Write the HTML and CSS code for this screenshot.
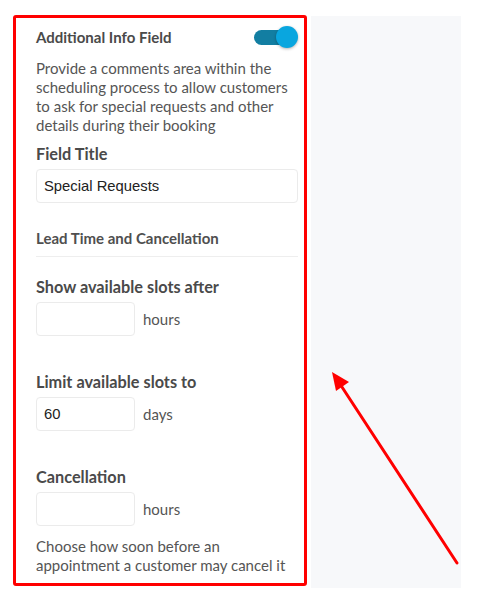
FILE: index.html
```html
<!DOCTYPE html>
<html>
<head>
<meta charset="utf-8">
<link rel="stylesheet" href="styles.css">
</head>
<body>
<div class="stage">
  <div class="panel">
    <div class="header-row">
      <span class="header-title">Additional Info Field</span>
      <span class="toggle"><span class="toggle-track"></span><span class="toggle-knob"></span></span>
    </div>
    <p class="desc">Provide a comments area within the scheduling process to allow customers to ask for special requests and other details during their booking</p>
    <div class="label label-first">Field Title</div>
    <div class="input input-wide">Special Requests</div>
    <div class="section-title">Lead Time and Cancellation</div>
    <div class="label label-s1">Show available slots after</div>
    <div class="field-row"><div class="input input-small"></div><span class="unit">hours</span></div>
    <div class="label label-gap">Limit available slots to</div>
    <div class="field-row"><div class="input input-small">60</div><span class="unit">days</span></div>
    <div class="label label-gap">Cancellation</div>
    <div class="field-row"><div class="input input-small"></div><span class="unit">hours</span></div>
    <p class="desc desc-bottom">Choose how soon before an appointment a customer may cancel it</p>
  </div>
  <div class="preview"></div>
</div>
<svg class="arrow" width="484" height="608" viewBox="0 0 484 608">
  <line x1="457" y1="563" x2="340" y2="384" stroke="#ff0000" stroke-width="3" stroke-linecap="round"/>
  <polygon points="332,372 349,382 336,391" fill="#ff0000"/>
</svg>
</body>
</html>
```
FILE: styles.css
```css
html, body {
  margin: 0;
  padding: 0;
  background: #ffffff;
}
body {
  width: 484px;
  height: 608px;
  overflow: hidden;
  position: relative;
  font-family: Lato, "Open Sans", sans-serif;
}
.stage {
  display: flex;
  align-items: flex-start;
  padding: 15px 0 0 13px;
}
.panel {
  box-sizing: border-box;
  width: 294px;
  height: 571px;
  border: 3px solid #ff0000;
  border-radius: 3px;
  padding: 7px 6px 0 20px;
  background: #ffffff;
}
.preview {
  width: 150px;
  height: 572px;
  margin: 1px 0 0 4px;
  background: #f7f8fa;
}
.header-row {
  display: flex;
  align-items: center;
  justify-content: space-between;
  height: 24px;
}
.header-title {
  font-weight: 700;
  font-size: 15px;
  color: #4a4a4a;
}
.toggle {
  position: relative;
  width: 45px;
  height: 24px;
  margin-right: -1px;
}
.toggle-track {
  position: absolute;
  left: 0;
  top: 5px;
  width: 38px;
  height: 15px;
  border-radius: 8px;
  background: #127ea2;
}
.toggle-knob {
  position: absolute;
  right: 1px;
  top: 1px;
  width: 22px;
  height: 22px;
  border-radius: 50%;
  background: #09a6df;
  box-shadow: 0 1px 3px rgba(0,0,0,0.3);
}
.desc {
  margin: 9.5px 0 0;
  font-size: 15px;
  line-height: 19px;
  color: #555555;
  width: 256px;
}
.label {
  font-weight: 700;
  font-size: 16.3px;
  line-height: 20px;
  color: #4a4a4a;
}
.label-first { margin-top: 9.5px; }
.label-s1 { margin-top: 19.5px; }
.label-gap { margin-top: 36px; }
.input {
  box-sizing: border-box;
  height: 34px;
  margin-top: 5px;
  border: 1px solid #ebebeb;
  border-radius: 4px;
  padding: 0 7px;
  display: flex;
  align-items: center;
  font-family: "Liberation Sans", Arial, sans-serif;
  font-size: 14.8px;
  color: #222222;
  background: #ffffff;
}
.input-wide { width: 262px; }
.input-small { width: 99px; }
.field-row {
  display: flex;
  align-items: flex-end;
}
.field-row .unit {
  margin-left: 8px;
  height: 34px;
  line-height: 34px;
  font-size: 15px;
  color: #555555;
}
.section-title {
  margin-top: 25px;
  width: 262px;
  font-weight: 700;
  font-size: 15px;
  line-height: 20px;
  color: #4f4f4f;
  padding-bottom: 8px;
  border-bottom: 1px solid #eeeeee;
}
.desc-bottom {
  margin-top: 11px;
  width: 256px;
}
.arrow {
  position: absolute;
  left: 0;
  top: 0;
  pointer-events: none;
}
```
